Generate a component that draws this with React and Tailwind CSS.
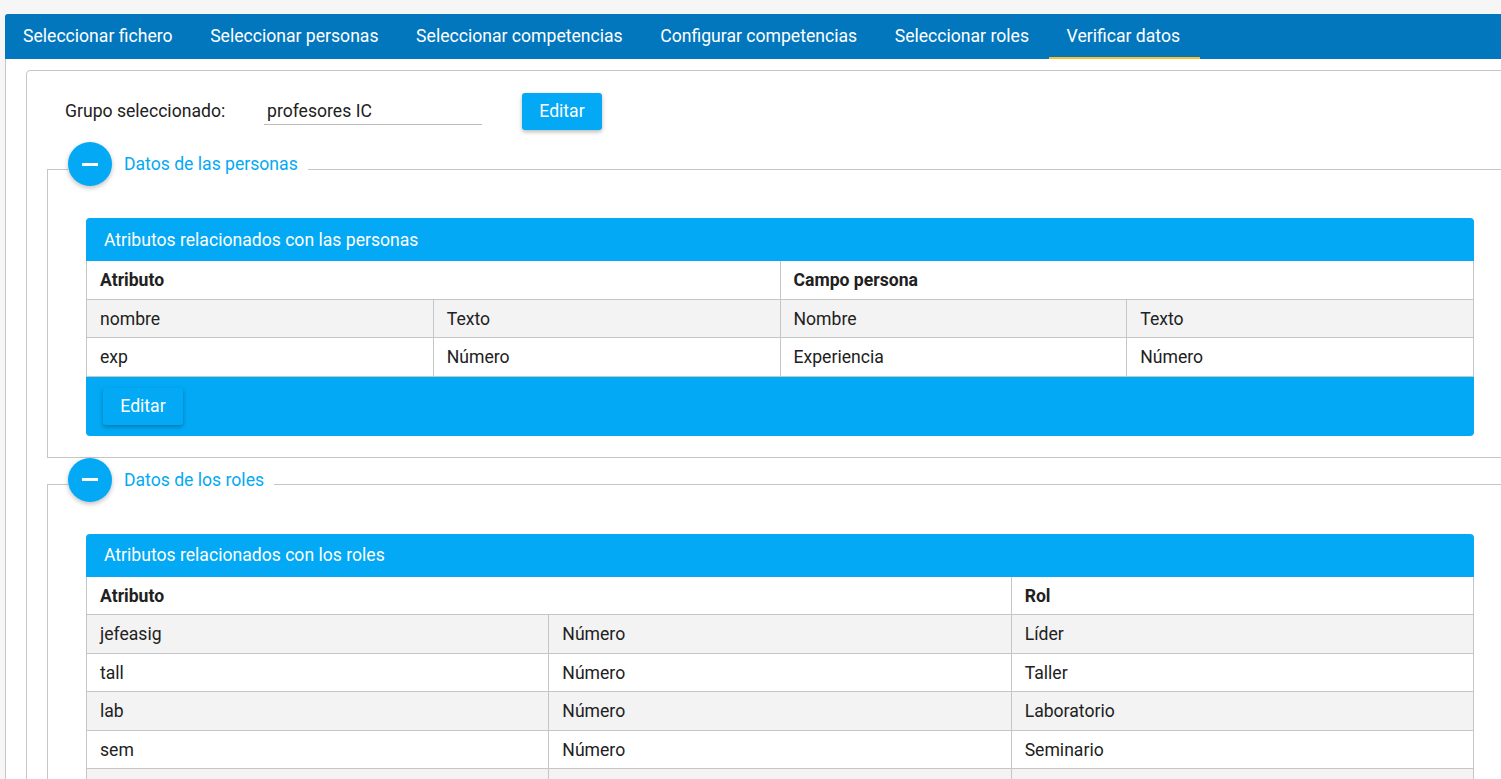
import React from 'react';

/* ─── Data ────────────────────────────────────────────────────────────── */
const tabs = [
  'Seleccionar fichero',
  'Seleccionar personas',
  'Seleccionar competencias',
  'Configurar competencias',
  'Seleccionar roles',
  'Verificar datos',
];

const personas = [
  ['nombre', 'Texto', 'Nombre', 'Texto'],
  ['exp', 'Número', 'Experiencia', 'Número'],
];

const roles = [
  ['jefeasig', 'Número', 'Líder'],
  ['tall', 'Número', 'Taller'],
  ['lab', 'Número', 'Laboratorio'],
  ['sem', 'Número', 'Seminario'],
  ['', '', ''],
];

/* ─── Pieces ──────────────────────────────────────────────────────────── */
const MinusButton = () => (
  <span className="w-[44px] h-[44px] rounded-full bg-[#03a9f4] flex items-center justify-center shadow-[0_2px_5px_rgba(0,0,0,0.26)] shrink-0">
    <span className="block w-[16px] h-[3px] bg-white" />
  </span>
);

const Section = ({ title, children }) => (
  <fieldset className="border border-[#c6c6c6] px-[38px] pt-0 pb-[21px] m-0 w-[1466px] min-w-0">
    <legend className="ml-[-18px] pr-[10px] pb-[10px] pl-0">
      <span className="flex items-center gap-[12px] h-[44px]">
        <MinusButton />
        <span className="text-[#03a9f4] text-[17.6px] pt-px">{title}</span>
      </span>
    </legend>
    <div className="mt-[22px]">{children}</div>
  </fieldset>
);

const EditarButton = () => (
  <button className="h-[37px] w-[80px] rounded-[3px] bg-[#03a9f4] text-white text-[17.6px] shadow-[0_2px_4px_rgba(0,0,0,0.28)]">
    Editar
  </button>
);

const DataTable = ({ title, heads, rows, cols, footer }) => (
  <div className="w-[1388px]">
    <div className="h-[43px] bg-[#03a9f4] rounded-t-[4px] flex items-center px-[18px] pt-px text-white text-[17.6px]">
      {title}
    </div>
    <table className="w-full border-collapse table-fixed text-[17.6px] text-[#212121]">
      <colgroup>
        {Array.from({ length: cols }).map((_, i) => (
          <col key={i} />
        ))}
      </colgroup>
      <thead>
        <tr className="h-[38px] bg-white">
          {heads.map(([h, span]) => (
            <th
              key={h}
              colSpan={span}
              className="border border-[#c6c6c6] border-t-0 text-left font-bold px-[13px] pt-px"
            >
              {h}
            </th>
          ))}
        </tr>
      </thead>
      <tbody>
        {rows.map((r, i) => (
          <tr key={i} className={`h-[38.5px] ${i % 2 === 0 ? 'bg-[#f3f3f3]' : 'bg-white'}`}>
            {r.map((c, j) => (
              <td key={j} className="border border-[#c6c6c6] px-[13px] pt-px">
                {c}
              </td>
            ))}
          </tr>
        ))}
      </tbody>
    </table>
    {footer && (
      <div className="h-[59px] bg-[#03a9f4] rounded-b-[4px] pl-[17px] pt-[11px]">
        <EditarButton />
      </div>
    )}
  </div>
);

/* ─── App ─────────────────────────────────────────────────────────────── */
export default function App() {
  return (
    <div
      className="w-[1501px] h-[779px] overflow-hidden bg-[#f6f6f6] pt-[14px] pl-[5px] text-[#212121]"
      style={{ fontFamily: 'Roboto, "Noto Sans", sans-serif' }}
    >
      <div className="w-[1600px] h-[800px] bg-white border-l border-[#c6c6c6] rounded-tl-[3px]">
        <nav className="h-[45px] bg-[#0277bd] flex rounded-tl-[3px] -ml-px">
          {tabs.map((t) => (
            <div
              key={t}
              className={`pl-[18px] pr-[19.6px] flex items-center text-white text-[17.6px] border-b-2 pt-[2px] ${
                t === 'Verificar datos' ? 'border-[#fbc02d]' : 'border-transparent'
              }`}
            >
              {t}
            </div>
          ))}
        </nav>

        <div className="pl-[20px] pt-[11px]">
          <div className="w-[1510px] h-[760px] border border-[#c6c6c6] rounded-tl-[4px] pl-[20px] pt-[22px]">
            <div className="flex items-center h-[37px] pl-[18px] text-[17.6px]">
              <span className="w-[199px]">Grupo seleccionado:</span>
              <div className="w-[218px] h-[26px] flex items-center border-b border-[#bdbdbd] mr-[40px]">
                <span className="pl-[3px]">profesores IC</span>
              </div>
              <EditarButton />
            </div>

            <div className="mt-[12px]">
              <Section title="Datos de las personas">
                <DataTable
                  title="Atributos relacionados con las personas"
                  heads={[['Atributo', 2], ['Campo persona', 2]]}
                  rows={personas}
                  cols={4}
                  footer
                />
              </Section>
              <Section title="Datos de los roles">
                <DataTable
                  title="Atributos relacionados con los roles"
                  heads={[['Atributo', 2], ['Rol', 1]]}
                  rows={roles}
                  cols={3}
                />
              </Section>
            </div>
          </div>
        </div>
      </div>
    </div>
  );
}
